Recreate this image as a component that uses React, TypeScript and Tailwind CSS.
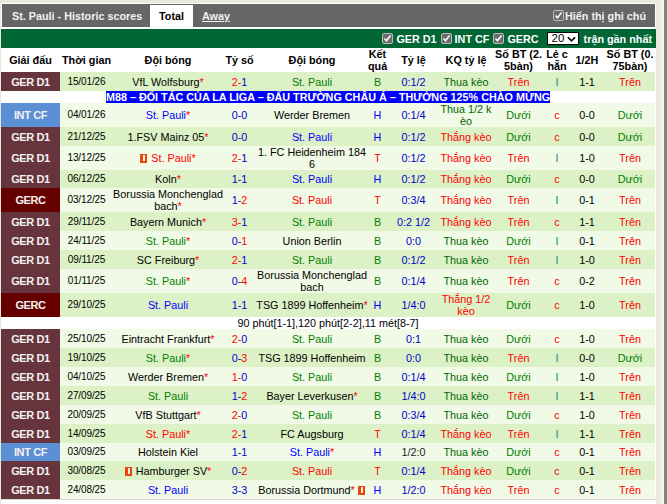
import React from "react";

type Row = {
  l: string; d: string; h: string; hc: string; s: string; a: string; ac: string;
  r: string; o: string; k: string; b: string; c: string; f: string; e: string;
  hf?: boolean; af?: boolean; rh: string; bg: string; oc?: string;
};

const colors: Record<string, string> = {
  k: "text-black",
  g: "text-[#008000]",
  b: "text-[#0000ff]",
  r: "text-[#ff0000]",
};
const leagueBg: Record<string, string> = {
  "GER D1": "bg-[#65343c]",
  "INT CF": "bg-[#5b8fd6]",
  GERC: "bg-[#660000]",
};
const D = "bg-[#dcf2c6]";
const L = "bg-[#f0fae6]";
const H19 = "h-[19px]";
const H18 = "h-[18px]";
const H24 = "h-[24px]";

const rows: (Row | { note: string; banner?: boolean })[] = [
  { l: "GER D1", d: "15/01/26", h: "VfL Wolfsburg*", hc: "k", s: "2-1", a: "St. Pauli", ac: "g", r: "B", o: "0:1/2", k: "Thua kèo", b: "Trên", c: "l", f: "1-1", e: "Trên", rh: H19, bg: D },
  { note: "M88 – ĐỐI TÁC CỦA LA LIGA – ĐẤU TRƯỜNG CHÂU Á – THƯỞNG 125% CHÀO MỪNG", banner: true },
  { l: "INT CF", d: "04/01/26", h: "St. Pauli*", hc: "b", s: "0-0", a: "Werder Bremen", ac: "k", r: "H", o: "0:1/4", k: "Thua 1/2 kèo", b: "Dưới", c: "c", f: "0-0", e: "Dưới", rh: H24, bg: L },
  { l: "GER D1", d: "21/12/25", h: "1.FSV Mainz 05*", hc: "k", s: "0-0", a: "St. Pauli", ac: "b", r: "H", o: "0:1/2", k: "Thắng kèo", b: "Dưới", c: "c", f: "0-0", e: "Dưới", rh: H19, bg: D },
  { l: "GER D1", d: "13/12/25", h: "St. Pauli*", hc: "r", hf: true, s: "2-1", a: "1. FC Heidenheim 1846", ac: "k", r: "T", o: "0:1/2", k: "Thắng kèo", b: "Trên", c: "l", f: "1-0", e: "Trên", rh: H24, bg: L },
  { l: "GER D1", d: "06/12/25", h: "Koln*", hc: "k", s: "1-1", a: "St. Pauli", ac: "b", r: "H", o: "0:1/2", k: "Thắng kèo", b: "Dưới", c: "c", f: "0-0", e: "Dưới", rh: H18, bg: D },
  { l: "GERC", d: "03/12/25", h: "Borussia Monchengladbach*", hc: "k", s: "1-2", a: "St. Pauli", ac: "r", r: "T", o: "0:3/4", k: "Thắng kèo", b: "Trên", c: "l", f: "0-1", e: "Trên", rh: H24, bg: L },
  { l: "GER D1", d: "29/11/25", h: "Bayern Munich*", hc: "k", s: "3-1", a: "St. Pauli", ac: "g", r: "B", o: "0:2 1/2", k: "Thắng kèo", b: "Trên", c: "c", f: "1-1", e: "Trên", rh: H19, bg: D },
  { l: "GER D1", d: "24/11/25", h: "St. Pauli*", hc: "g", s: "0-1", a: "Union Berlin", ac: "k", r: "B", o: "0:0", k: "Thua kèo", b: "Dưới", c: "l", f: "0-1", e: "Trên", rh: H19, bg: L },
  { l: "GER D1", d: "09/11/25", h: "SC Freiburg*", hc: "k", s: "2-1", a: "St. Pauli", ac: "g", r: "B", o: "0:1/2", k: "Thua kèo", b: "Trên", c: "l", f: "1-0", e: "Trên", rh: H19, bg: D },
  { l: "GER D1", d: "01/11/25", h: "St. Pauli*", hc: "g", s: "0-4", a: "Borussia Monchengladbach", ac: "k", r: "B", o: "0:1/4", k: "Thua kèo", b: "Trên", c: "c", f: "0-2", e: "Trên", rh: H24, bg: L },
  { l: "GERC", d: "29/10/25", h: "St. Pauli", hc: "b", s: "1-1", a: "TSG 1899 Hoffenheim*", ac: "k", r: "H", o: "1/4:0", k: "Thắng 1/2 kèo", b: "Dưới", c: "c", f: "1-0", e: "Trên", rh: H24, bg: D },
  { note: "90 phút[1-1],120 phút[2-2],11 mét[8-7]" },
  { l: "GER D1", d: "25/10/25", h: "Eintracht Frankfurt*", hc: "k", s: "2-0", a: "St. Pauli", ac: "g", r: "B", o: "0:1", k: "Thua kèo", b: "Dưới", c: "c", f: "1-0", e: "Trên", rh: H19, bg: L },
  { l: "GER D1", d: "19/10/25", h: "St. Pauli*", hc: "g", s: "0-3", a: "TSG 1899 Hoffenheim", ac: "k", r: "B", o: "0:0", k: "Thua kèo", b: "Trên", c: "l", f: "0-0", e: "Dưới", rh: H19, bg: D },
  { l: "GER D1", d: "04/10/25", h: "Werder Bremen*", hc: "k", s: "1-0", a: "St. Pauli", ac: "g", r: "B", o: "0:1/4", k: "Thua kèo", b: "Dưới", c: "l", f: "1-0", e: "Trên", rh: H19, bg: L },
  { l: "GER D1", d: "27/09/25", h: "St. Pauli", hc: "g", s: "1-2", a: "Bayer Leverkusen*", ac: "k", r: "B", o: "1/4:0", k: "Thua kèo", b: "Trên", c: "l", f: "1-1", e: "Trên", rh: H19, bg: D },
  { l: "GER D1", d: "20/09/25", h: "VfB Stuttgart*", hc: "k", s: "2-0", a: "St. Pauli", ac: "g", r: "B", o: "0:3/4", k: "Thua kèo", b: "Dưới", c: "c", f: "1-0", e: "Trên", rh: H19, bg: L },
  { l: "GER D1", d: "14/09/25", h: "St. Pauli*", hc: "r", s: "2-1", a: "FC Augsburg", ac: "k", r: "T", o: "0:1/4", k: "Thắng kèo", b: "Trên", c: "l", f: "1-1", e: "Trên", rh: H19, bg: D },
  { l: "INT CF", d: "03/09/25", h: "Holstein Kiel", hc: "k", s: "1-1", a: "St. Pauli*", ac: "b", r: "H", o: "1/2:0", oc: "text-[#222222]", k: "Thua kèo", b: "Dưới", c: "c", f: "0-1", e: "Trên", rh: H18, bg: L },
  { l: "GER D1", d: "30/08/25", h: "Hamburger SV*", hc: "k", hf: true, s: "0-2", a: "St. Pauli", ac: "r", r: "T", o: "0:1/4", k: "Thắng kèo", b: "Dưới", c: "c", f: "0-1", e: "Trên", rh: H19, bg: D },
  { l: "GER D1", d: "24/08/25", h: "St. Pauli", hc: "b", s: "3-3", a: "Borussia Dortmund*", ac: "k", af: true, r: "H", o: "1/2:0", k: "Thắng kèo", b: "Trên", c: "c", f: "0-1", e: "Trên", rh: H19, bg: L },
];

const Flag = () => (
  <span className="inline-block w-[7px] h-[9px] bg-[#e8440c] align-[-1px] relative mr-px">
    <span className="absolute left-[3px] top-[1px] w-[2px] h-[6px] bg-[#fff2d8]" />
  </span>
);

const Star = ({ t }: { t: string }) =>
  t.endsWith("*") ? (
    <>
      {t.slice(0, -1)}
      <span className="text-[#ff0000]">*</span>
    </>
  ) : (
    <>{t}</>
  );

const Score = ({ s }: { s: string }) => {
  const [a, b] = s.split("-").map(Number);
  const ac = a > b ? "text-[#ff0000]" : "text-[#0000cc]";
  const bc = b > a ? "text-[#ff0000]" : "text-[#0000cc]";
  return (
    <>
      <span className={ac}>{a}-</span>
      <span className={bc}>{b}</span>
    </>
  );
};

const Box = () => (
  <span className="inline-block w-[11px] h-[11px] bg-[#6a6a6a] border border-[#bdbdbd] rounded-[2px] shrink-0">
    <svg viewBox="0 0 9 9" className="w-[9px] h-[9px] block">
      <path d="M1.5 4.5 L3.5 6.8 L7.5 1.5" fill="none" stroke="#ffffff" strokeWidth="1.6" />
    </svg>
  </span>
);

const headers = ["Giải đấu", "Thời gian", "Đội bóng", "Tỷ số", "Đội bóng", "Kết quả", "Tỷ lệ", "KQ tỷ lệ", "Số BT (2.\u200b5bàn)", "Lẻ c hẵn", "1/2H", "Số BT (0.\u200b75bàn)"];
const widths = ["w-[59px]", "w-[53px]", "w-[110px]", "w-[33px]", "w-[112px]", "w-[19px]", "w-[53px]", "w-[52px]", "w-[53px]", "w-[24px]", "w-[36px]", "w-[50px]"];

export default function App() {
  return (
    <div className="w-[667px] h-[504px] overflow-hidden flex bg-[#e8e8e0] text-[10.8px] leading-[12px] text-black" style={{ fontFamily: '"Liberation Sans", Arial, sans-serif' }}>
      <div className="w-[655px] ml-px mt-[3px] shrink-0 bg-white">
        <div className="h-[24px] flex items-end bg-[#666666] border border-white border-b-0 font-bold text-[#f2f2f2]">
          <div className="h-[23px] flex items-center pl-[10px] w-[148px]">St. Pauli - Historic scores</div>
          <div className="h-[22px] w-[43px] bg-white text-black flex items-center justify-center">Total</div>
          <div className="h-[23px] flex items-center pl-[9px] underline">Away</div>
          <div className="h-[23px] flex items-center gap-[1px] ml-auto pr-[9px]">
            <Box />
            <span>Hiển thị ghi chú</span>
          </div>
        </div>
        <div className="mt-[2px] h-[19px] bg-[#006633] flex items-center justify-end pr-[4px] gap-[4px] font-bold text-white">
          <span className="flex items-center gap-[3px]"><Box />GER D1</span>
          <span className="flex items-center gap-[3px]"><Box />INT CF</span>
          <span className="flex items-center gap-[3px]"><Box />GERC</span>
          <span className="relative ml-[4px] mr-[1px] w-[32px] h-[13px] block">
            <select defaultValue="20" className="appearance-none block w-full h-full bg-white text-black font-normal text-[11.5px] leading-[11px] border border-black pl-[4px] p-0 rounded-none">
              <option>20</option>
            </select>
            <svg viewBox="0 0 10 6" className="absolute right-[3px] top-[4px] w-[9px] h-[6px] pointer-events-none">
              <path d="M1 1 L5 5 L9 1" fill="none" stroke="#000000" strokeWidth="1.8" />
            </svg>
          </span>
          <span>trận gần nhất</span>
        </div>
        <table className="w-[654px] table-fixed border-collapse text-center">
          <colgroup>
            {widths.map((w, i) => (
              <col key={i} className={w} />
            ))}
          </colgroup>
          <thead>
            <tr className="h-[24px]">
              {headers.map((h, i) => (
                <th key={i} className="p-0 font-bold leading-[12px]">{h}</th>
              ))}
            </tr>
          </thead>
          <tbody>
            {rows.map((r, i) =>
              "note" in r ? (
                <tr key={i} className="h-[12px] bg-white">
                  <td colSpan={12} className="p-0 leading-[12px]">
                    {r.banner ? (
                      <span className="inline-block bg-[#0000ff] text-white font-bold leading-[12px]">{r.note}</span>
                    ) : (
                      r.note
                    )}
                  </td>
                </tr>
              ) : (
                <tr key={i} className={`${r.rh} ${r.bg}`}>
                  <td className={`p-0 font-bold text-[11px] tracking-[-0.4px] text-[#f4f0f0] ${leagueBg[r.l]}`}>{r.l}</td>
                  <td className="p-0 text-[10px] tracking-[-0.1px]">{r.d}</td>
                  <td className={`p-0 break-all ${colors[r.hc]}`}>
                    {r.hf && <><Flag /> </>}
                    <Star t={r.h} />
                  </td>
                  <td className="p-0"><Score s={r.s} /></td>
                  <td className={`p-0 break-all ${colors[r.ac]}`}>
                    <Star t={r.a} />
                    {r.af && <> <Flag /></>}
                  </td>
                  <td className={`p-0 ${r.r === "B" ? "text-[#008000]" : r.r === "H" ? "text-[#0000ff]" : "text-[#ff0000]"}`}>{r.r}</td>
                  <td className={`p-0 ${r.oc ?? "text-[#0000cc]"}`}>{r.o}</td>
                  <td className={`p-0 break-all ${r.k.startsWith("Thắng") ? "text-[#ff0000]" : "text-[#006600]"}`}>{r.k}</td>
                  <td className={`p-0 ${r.b === "Trên" ? "text-[#ff0000]" : "text-[#008000]"}`}>{r.b}</td>
                  <td className={`p-0 ${r.c === "c" ? "text-[#ff0000]" : "text-[#008080]"}`}>{r.c === "c" ? "c" : "l"}</td>
                  <td className="p-0">{r.f}</td>
                  <td className={`p-0 ${r.e === "Trên" ? "text-[#ff0000]" : "text-[#008000]"}`}>{r.e}</td>
                </tr>
              )
            )}
          </tbody>
        </table>
        <div className="h-px bg-[#d8d8d0]" />
      </div>
      <div className="w-[5px] shrink-0" />
      <div className="w-[3px] shrink-0 bg-[#f4f4f0]" />
      <div className="flex-1 bg-[#85857c]" />
    </div>
  );
}
